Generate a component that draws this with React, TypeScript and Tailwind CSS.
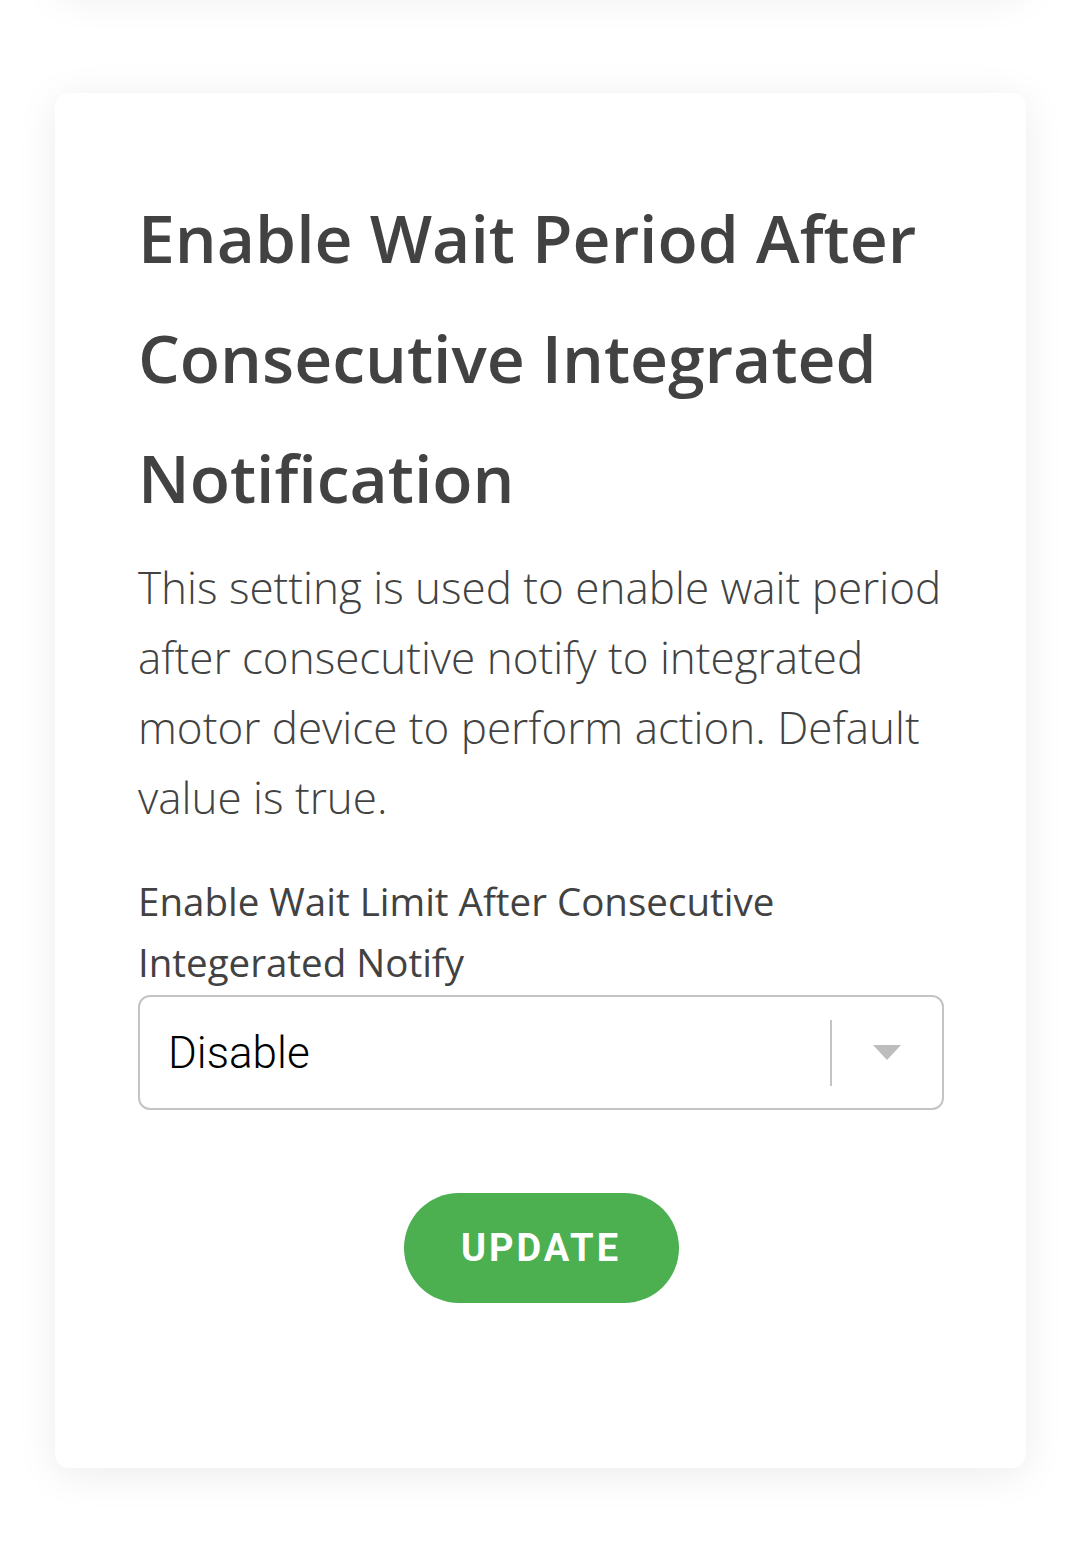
import React from "react";

const SettingCard = () => {
  return (
    <div className="ml-[55px] mr-[54px] rounded-[14px] bg-white pl-[83px] pr-[82px] pt-[84px] pb-[165px] shadow-[0_6px_40px_rgba(0,0,0,0.08)]">
      <h2 className="font-['Open_Sans',sans-serif] text-[66px] font-semibold leading-[120px] text-[#424242]">
        Enable Wait Period After Consecutive Integrated Notification
      </h2>
      <p className="mt-[15px] font-['Open_Sans',sans-serif] text-[44px] font-light leading-[70px] text-[#424242]">
        This setting is used to enable wait period after consecutive notify to integrated motor device to perform action. Default value is true.
      </p>
      <label className="mt-[39px] block font-['Open_Sans',sans-serif] text-[38.5px] leading-[61px] text-[#424242]">
        Enable Wait Limit After Consecutive Integerated Notify
      </label>
      <div className="mt-[2px] flex h-[115px] items-center rounded-[12px] border-2 border-[#c4c4c4] bg-white pl-[28px]">
        <span className="flex-1 font-['Roboto',sans-serif] text-[44px] font-light text-black">Disable</span>
        <div className="h-[66px] w-[2px] bg-[#c4c4c4]" />
        <div className="flex w-[110px] items-center justify-center">
          <svg width="28" height="15" viewBox="0 0 28 15">
            <polygon points="0,0 28,0 14,15" fill="#bdbdbd" />
          </svg>
        </div>
      </div>
      <div className="mt-[83px] flex justify-center">
        <button className="h-[110px] w-[275px] rounded-full bg-[#4caf50] font-['Roboto',sans-serif] text-[38px] font-bold tracking-[3px] text-white">
          UPDATE
        </button>
      </div>
    </div>
  );
};

export default function App() {
  return (
    <div className="min-h-[1557px] overflow-hidden bg-white">
      {/* bottom edge of the previous card, scrolled off the top */}
      <div className="-mt-[200px] ml-[55px] mr-[54px] h-[190px] rounded-[14px] bg-white shadow-[0_6px_40px_rgba(0,0,0,0.08)]" />
      <div className="pt-[103px]">
        <SettingCard />
      </div>
    </div>
  );
}
